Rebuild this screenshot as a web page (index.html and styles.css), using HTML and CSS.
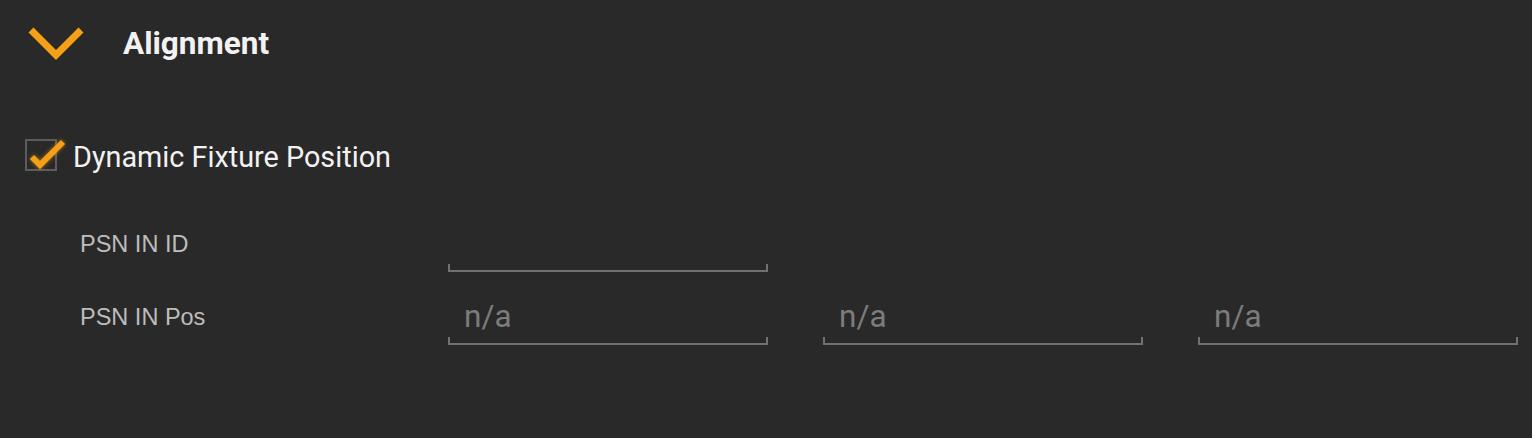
FILE: index.html
```html
<!DOCTYPE html>
<html lang="en">
<head>
  <meta charset="UTF-8" />
  <title>Alignment</title>
  <link rel="stylesheet" href="styles.css">
</head>
<body>
  <div class="panel">
    <div class="section-head">
      <svg class="chevron" width="56" height="34" viewBox="0 0 56 34">
        <polyline points="3,4 28,29 53,4" fill="none" stroke="#f5a015" stroke-width="7" stroke-linecap="butt" stroke-linejoin="miter"/>
      </svg>
      <h2 class="section-title">Alignment</h2>
    </div>

    <label class="check-row">
      <span class="checkbox">
        <svg class="checkmark" width="44" height="34" viewBox="0 0 44 34">
          <polyline points="5,18 13,26 36,3" fill="none" stroke="#f5a015" stroke-width="6" stroke-linecap="butt" stroke-linejoin="miter"/>
        </svg>
      </span>
      <span class="check-text">Dynamic Fixture Position</span>
    </label>

    <div class="props">
      <div class="prop-label">PSN IN ID</div>
      <div class="field">
        <span class="field-value"></span>
        <span class="field-line"></span>
      </div>
      <div></div>
      <div></div>

      <div class="prop-label">PSN IN Pos</div>
      <div class="field">
        <span class="field-value">n/a</span>
        <span class="field-line"></span>
      </div>
      <div class="field">
        <span class="field-value">n/a</span>
        <span class="field-line"></span>
      </div>
      <div class="field">
        <span class="field-value">n/a</span>
        <span class="field-line"></span>
      </div>
    </div>
  </div>
</body>
</html>
```

FILE: styles.css
```css
html, body {
  margin: 0;
  background: #292929;
}
body {
  width: 1532px;
  height: 438px;
  overflow: hidden;
  font-family: Roboto, "Noto Sans", sans-serif;
  color: #f2f2f2;
}
.panel {
  display: flex;
  flex-direction: column;
}
.section-head {
  height: 86px;
  display: flex;
  align-items: center;
  padding-left: 28px;
}
.chevron {
  display: block;
}
.section-title {
  margin: 2px 0 0 39px;
  font-size: 31.5px;
  font-weight: 700;
  line-height: 40px;
  color: #f2f2f2;
}
.check-row {
  margin-top: 50px;
  height: 40px;
  display: flex;
  align-items: center;
  padding-left: 25px;
}
.checkbox {
  position: relative;
  width: 28px;
  height: 28px;
  margin-top: -2px;
  border: 2px solid #5c5c5c;
}
.checkmark {
  position: absolute;
  left: 0;
  top: -2px;
  filter: drop-shadow(0 0 2px rgba(245, 160, 21, 0.6));
}
.check-text {
  margin-left: 16px;
  font-size: 28.8px;
  line-height: 40px;
  padding-top: 2px;
}
.props {
  margin-top: 53px;
  padding-left: 80px;
  display: grid;
  grid-template-columns: 313px 320px 320px 320px;
  column-gap: 55px;
  row-gap: 30px;
  align-items: end;
}
.prop-label {
  font-family: "Liberation Sans", Arial, sans-serif;
  font-size: 23.5px;
  line-height: 30px;
  color: #bdbdbd;
  margin-bottom: 13px;
}
.field {
  display: flex;
  flex-direction: column;
}
.field-value {
  height: 30px;
  line-height: 30px;
  padding-left: 16px;
  font-size: 31.5px;
  color: #7c7c7c;
}
.field-line {
  margin-top: 5px;
  height: 6px;
  border: 2px solid #717171;
  border-top: none;
}
```
